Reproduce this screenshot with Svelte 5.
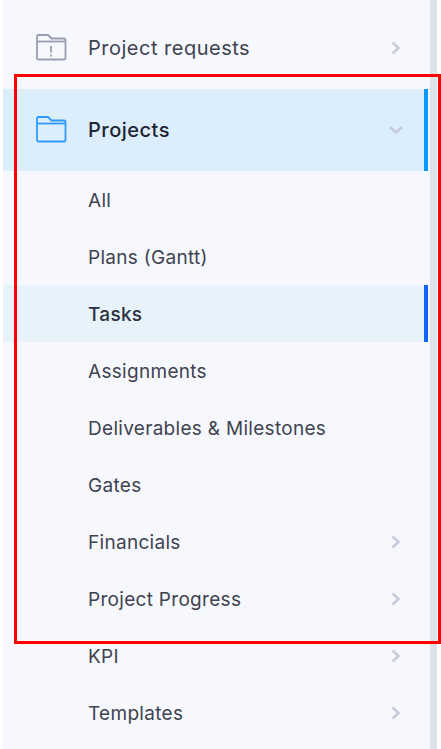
<script>
	const subItems = [
		{ label: 'All' },
		{ label: 'Plans (Gantt)' },
		{ label: 'Tasks', selected: true },
		{ label: 'Assignments' },
		{ label: 'Deliverables & Milestones' },
		{ label: 'Gates' },
		{ label: 'Financials', arrow: true },
		{ label: 'Project Progress', arrow: true },
		{ label: 'KPI', arrow: true },
		{ label: 'Templates', arrow: true }
	];
</script>

<div class="page">
	<nav class="sidebar">
		<div class="row top">
			<svg class="folder" width="32" height="28" viewBox="0 0 32 28" fill="none" stroke="#9b9db5" stroke-width="1.8" stroke-linejoin="round">
				<path d="M2 25V3.500A1.500 1.500 0 0 1 3.500 2H13l3.500 3.500H29A1.500 1.500 0 0 1 30.500 7v18a1.500 1.500 0 0 1-1.500 1.500H3.500A1.500 1.500 0 0 1 2 25Z" />
				<path d="M2 8.500h28.500" />
				<path d="M16 13v6.500M16 21.500v2" />
			</svg>
			<span class="label">Project requests</span>
			<svg class="chev" width="12" height="16" viewBox="0 0 12 16"><path d="M2.500 2.500 8.500 8l-6 5.500" /></svg>
		</div>

		<div class="row top active">
			<svg class="folder" width="32" height="28" viewBox="0 0 32 28" fill="none" stroke="#2f9bff" stroke-width="1.8" stroke-linejoin="round">
				<path d="M2 25V3.500A1.500 1.500 0 0 1 3.500 2H13l3.500 3.500H29A1.500 1.500 0 0 1 30.500 7v18a1.500 1.500 0 0 1-1.500 1.500H3.500A1.500 1.500 0 0 1 2 25Z" />
				<path d="M2 8.500h28.500" />
			</svg>
			<span class="label strong">Projects</span>
			<svg class="chev down" width="16" height="12" viewBox="0 0 16 12"><path d="M2 3l6 5.500L14 3" /></svg>
		</div>

		{#each subItems as item}
			<div class="row sub" class:selected={item.selected}>
				<span class="label">{item.label}</span>
				{#if item.arrow}
					<svg class="chev" width="12" height="16" viewBox="0 0 12 16"><path d="M2.500 2.500 8.500 8l-6 5.500" /></svg>
				{/if}
			</div>
		{/each}
	</nav>
	<div class="scrollbar"></div>
	<div class="highlight"></div>
</div>

<style>
	:global(body) {
		margin: 0;
		background: #fff;
		overflow: hidden;
	}

	.page {
		position: relative;
		display: flex;
		height: 749px;
		width: 441px;
		padding-left: 3px;
		box-sizing: border-box;
		overflow: hidden;
		font-family: Inter, 'Noto Sans', sans-serif;
	}

	.sidebar {
		width: 427px;
		padding: 6px 2px 0 0;
		box-sizing: border-box;
		background: #f6f8fd;
		flex: none;
	}

	.scrollbar {
		width: 7px;
		background: #dde2ea;
		flex: none;
	}

	.row {
		display: flex;
		align-items: center;
		box-sizing: border-box;
		padding-right: 26px;
		color: #3f4350;
		font-size: 19px;
		letter-spacing: 0.3px;
	}

	.top {
		height: 83px;
		padding-left: 32px;
	}

	.top .label {
		margin-left: 21px;
		font-size: 20px;
		letter-spacing: 0.5px;
	}

	.folder {
		flex: none;
		margin-bottom: 2px;
	}

	.sub {
		height: 57px;
		padding-left: 85px;
	}

	.sub .label {
		padding-top: 1px;
	}

	.label {
		flex: 1;
	}

	.top .strong {
		font-weight: 500;
		color: #1f2433;
	}

	.active {
		height: 82px;
		background: #dcedfc;
		border-right: 4px solid #0a98fb;
		padding-right: 22px;
	}

	.selected {
		background: #e7f2fb;
		border-right: 4px solid #0f66f6;
		padding-right: 22px;
		font-weight: 500;
		color: #2c3140;
	}

	.chev {
		flex: none;
	}

	.chev path {
		fill: none;
		stroke: #c6cada;
		stroke-width: 2.500;
	}

	.down {
		margin-right: -2px;
	}

	.highlight {
		position: absolute;
		left: 14px;
		top: 74px;
		width: 421px;
		height: 564px;
		border: 3px solid #f00;
		pointer-events: none;
	}
</style>
